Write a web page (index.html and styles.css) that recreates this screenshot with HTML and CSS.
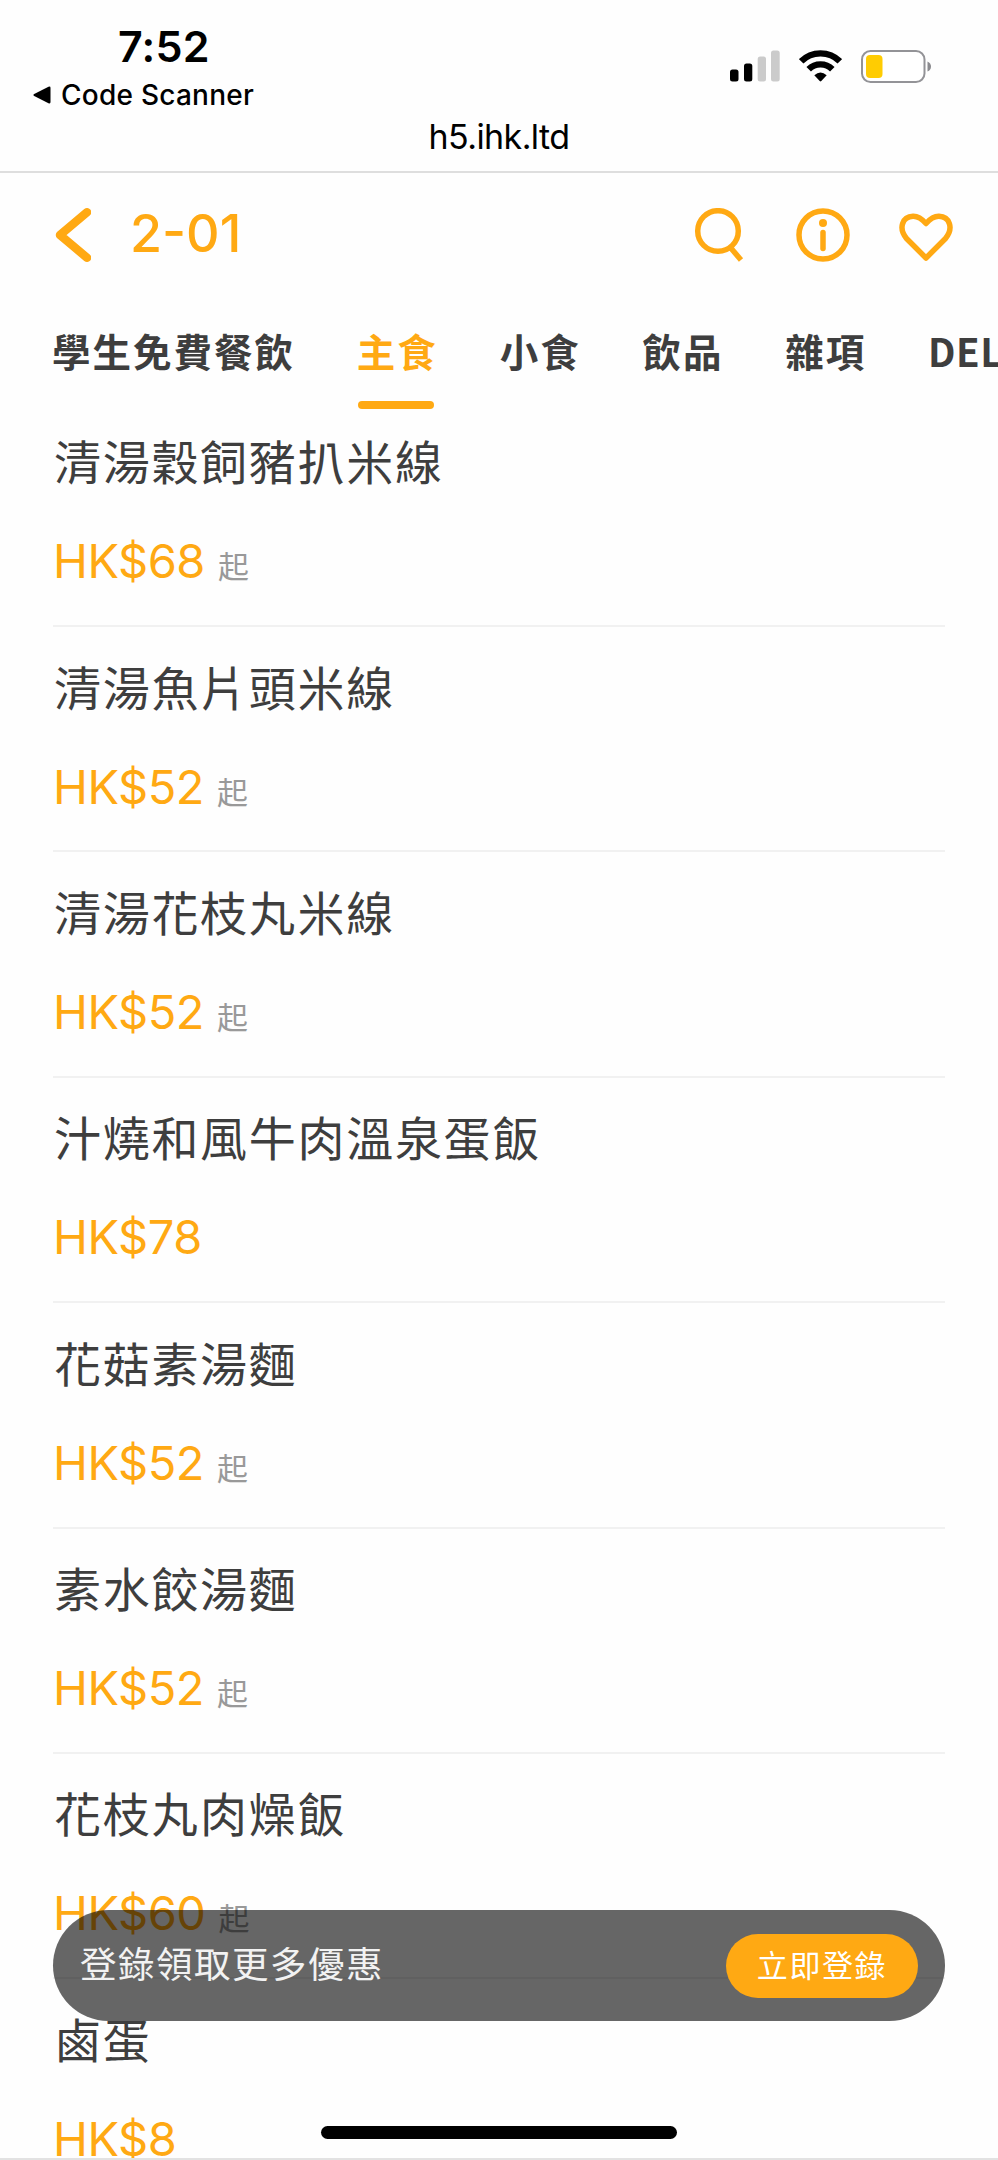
FILE: index.html
```html
<!DOCTYPE html>
<html lang="zh-Hant">
<head>
<meta charset="utf-8">
<title>2-01</title>
<link rel="stylesheet" href="styles.css">
</head>
<body>
<div class="screen">
  <header class="system">
    <div class="status-left">
      <div class="time">7:52</div>
      <div class="back-app">
        <svg class="back-tri" width="18" height="18" viewBox="0 0 18 18"><path d="M1.2 8 15.5.8Q17.5 0 17.5 2V16Q17.5 18 15.5 17.2L1.2 10Q-.4 9 1.2 8Z"/></svg>
        <span>Code Scanner</span>
      </div>
    </div>
    <div class="status-icons">
      <svg width="50" height="32" viewBox="0 0 50 32"><rect x="0" y="19.500" width="8.500" height="12" rx="2.500"/><rect x="14" y="13.500" width="8.300" height="18" rx="2.500"/><rect x="27.700" y="6.500" width="8.300" height="25" rx="2.500" fill="#cbcbcb"/><rect x="41" y="0.500" width="8.700" height="31" rx="2.500" fill="#cbcbcb"/></svg>
      <svg width="43" height="32" viewBox="0 0 43 32"><g fill="none" stroke="#000" stroke-width="6.300"><path d="M2.200 11.300Q10 3.300 21.500 3.300T40.800 11.300"/><path d="M9.700 19.200Q14.500 14.300 21.500 14.300T33.300 19.200"/></g><path d="M15.300 25.200Q21.500 19.800 27.700 25.200L22.300 31Q21.500 31.800 20.700 31Z"/></svg>
      <svg width="71" height="33" viewBox="0 0 71 33"><rect x="1" y="1" width="62.500" height="31" rx="8.500" fill="#fff" stroke="#939397" stroke-width="2"/><rect x="5" y="5" width="16.500" height="23" rx="4" fill="#ffcc02"/><path d="M66.500 11.500Q70 13 70 16.500T66.500 21.500Z" fill="#8b8b8f"/></svg>
    </div>
    <div class="host">h5.ihk.ltd</div>
  </header>

  <nav class="toolbar">
    <svg width="36" height="54" viewBox="0 0 36 54"><path d="M32 4.300 5 27 32 49.700" class="line chevron"/></svg>
    <h1 class="table-no">2-01</h1>
    <div class="actions">
      <svg width="52" height="54" viewBox="0 0 52 54"><circle cx="24" cy="23" r="20.300" class="line"/><path d="M36 39 47 52" class="line flat"/></svg>
      <svg width="54" height="54" viewBox="0 0 54 54"><circle cx="27" cy="27" r="24" class="line"/><circle cx="27" cy="15" r="4" class="solid"/><path d="M27 24.500V40.500" class="line"/></svg>
      <svg width="54" height="54" viewBox="0 0 54 54"><path d="M27 50 7.500 30.500C-1 20 3.500 8.500 14 8.200 20 8 23.500 11.500 27 15.500 30.500 11.500 34 8 40 8.200 50.500 8.500 55 20 46.500 30.500Z" class="line heart"/></svg>
    </div>
  </nav>

  <nav class="tabs">
    <span class="tab">學生免費餐飲</span>
    <span class="tab active">主食</span>
    <span class="tab">小食</span>
    <span class="tab">飲品</span>
    <span class="tab">雜項</span>
    <span class="tab latin">DEL</span>
  </nav>

  <main class="menu">
    <article class="item"><h2>清湯穀飼豬扒米線</h2><p class="price">HK$68<small>起</small></p></article>
    <article class="item"><h2>清湯魚片頭米線</h2><p class="price">HK$52<small>起</small></p></article>
    <article class="item"><h2>清湯花枝丸米線</h2><p class="price">HK$52<small>起</small></p></article>
    <article class="item"><h2>汁燒和風牛肉溫泉蛋飯</h2><p class="price">HK$78</p></article>
    <article class="item"><h2>花菇素湯麵</h2><p class="price">HK$52<small>起</small></p></article>
    <article class="item"><h2>素水餃湯麵</h2><p class="price">HK$52<small>起</small></p></article>
    <article class="item"><h2>花枝丸肉燥飯</h2><p class="price">HK$60<small>起</small></p></article>
    <article class="item"><h2>鹵蛋</h2><p class="price">HK$8</p></article>
  </main>

  <aside class="login-bar">
    <span>登錄領取更多優惠</span>
    <button class="login-btn">立即登錄</button>
  </aside>
  <div class="home-indicator"></div>
  <div class="bottom-edge"></div>
</div>
</body>
</html>
```
FILE: styles.css
```css
* { box-sizing: border-box; margin: 0; padding: 0; }
body { background: #fff; }
.screen {
  --accent: #ffa913;
  position: relative;
  width: 998px;
  height: 2160px;
  overflow: hidden;
  background: #fefefe;
  color: #3e3e3e;
  font-family: Inter, "Noto Sans CJK TC", sans-serif;
}
svg { display: block; flex: none; }

/* System status area */
.system {
  display: grid;
  grid-template-columns: 1fr auto;
  grid-template-rows: 114px 56px;
  height: 173px;
  border-bottom: 2px solid #dedede;
  color: #000;
}
.status-left { padding: 20px 0 0 33px; }
.time { padding-left: 85px; font-size: 43px; font-weight: 600; line-height: 52px; letter-spacing: .2px; }
.back-app { display: flex; align-items: center; gap: 10px; height: 46px; font-size: 28px; font-weight: 500; letter-spacing: .25px; white-space: nowrap; }
.status-icons { display: flex; align-items: flex-start; gap: 19px; padding: 50px 66px 0 0; }
.host { grid-column: 1 / -1; text-align: center; font-size: 34px; line-height: 46px; letter-spacing: -.6px; }

/* Restaurant toolbar */
.toolbar { display: flex; align-items: center; height: 124px; padding: 0 45px 0 55px; }
.table-no { margin: -2px 0 0 39px; color: var(--accent); font-size: 52px; font-weight: 500; line-height: 60px; }
.actions { display: flex; margin-left: auto; gap: 49.500px; }
.line { fill: none; stroke: var(--accent); stroke-width: 5.5; stroke-linecap: round; stroke-linejoin: round; }
.chevron { stroke-width: 8.500; }
.flat { stroke-linecap: butt; }
.solid { fill: var(--accent); }

/* Category tabs */
.tabs { display: flex; gap: 61.8px; height: 113px; padding: 28px 0 0 52px; white-space: nowrap; }
.tab { flex: none; height: 85px; font-size: 38.500px; font-weight: 700; line-height: 56px; letter-spacing: 2px; }
.latin { font-family: "Noto Sans CJK TC", sans-serif; line-height: 50px; letter-spacing: .5px; }
.active { color: var(--accent); }
.active::after { content: ""; display: block; width: 76px; height: 8px; margin: 20px 0 0 1px; border-radius: 4px; background: var(--accent); }

/* Dishes */
.menu { padding: 0 53px; }
.item { height: 225.400px; padding: 26.500px 0 0; border-bottom: 2px solid #f1f1f1; }
.item:first-child { height: 217px; padding-top: 18px; }
.item h2 { padding-left: 1px; font-size: 47px; font-weight: 400; line-height: 70px; letter-spacing: 1.700px; }
.price { display: flex; align-items: baseline; gap: 13px; height: 66px; margin-top: 30px; color: var(--accent); font-size: 47px; line-height: 65px; letter-spacing: -.5px; }
.price small { color: #999; font-size: 31px; }

/* Floating login prompt */
.login-bar {
  position: absolute;
  left: 53px;
  top: 1910px;
  display: flex;
  align-items: center;
  justify-content: space-between;
  width: 892px;
  height: 111px;
  padding: 0 27px;
  border-radius: 56px;
  background: rgba(0, 0, 0, .6);
  color: #f2f2f2;
  font-size: 36.500px;
  letter-spacing: 1.500px;
}
.login-bar span { padding-bottom: 6px; }
.login-btn { width: 192px; height: 64px; border: 0; border-radius: 32px; background: var(--accent); color: #fff; font: 31px/62px Inter, "Noto Sans CJK TC", sans-serif; letter-spacing: 1.600px; }
.home-indicator { position: absolute; left: 321px; top: 2126px; width: 356px; height: 13px; border-radius: 7px; background: #000; }
.bottom-edge { position: absolute; left: 0; bottom: 0; width: 100%; height: 2px; background: #e2e2e2; }
```
